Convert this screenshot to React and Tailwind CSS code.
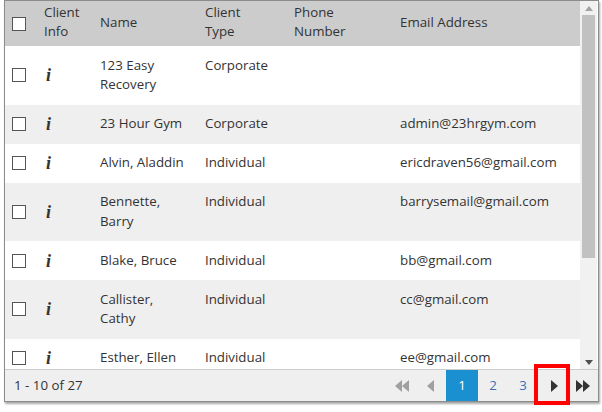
import React from 'react';

const clients = [
  { name: '123 Easy Recovery', type: 'Corporate', phone: '', email: '' },
  { name: '23 Hour Gym', type: 'Corporate', phone: '', email: 'admin@23hrgym.com' },
  { name: 'Alvin, Aladdin', type: 'Individual', phone: '', email: 'ericdraven56@gmail.com' },
  { name: 'Bennette, Barry', type: 'Individual', phone: '', email: 'barrysemail@gmail.com' },
  { name: 'Blake, Bruce', type: 'Individual', phone: '', email: 'bb@gmail.com' },
  { name: 'Callister, Cathy', type: 'Individual', phone: '', email: 'cc@gmail.com' },
  { name: 'Esther, Ellen', type: 'Individual', phone: '', email: 'ee@gmail.com' },
];

function Checkbox() {
  return <span className="block w-[14px] h-[14px] border border-[#555] bg-white" />;
}

function Triangle({ dir = 'right', color }) {
  return (
    <svg width="8" height="12" viewBox="0 0 8 12">
      {dir === 'right' ? (
        <path d="M1 0 L8 6 L1 12 Z" fill={color} />
      ) : (
        <path d="M7 0 L0 6 L7 12 Z" fill={color} />
      )}
    </svg>
  );
}

function DoubleTriangle({ dir = 'right', color }) {
  return (
    <svg width="15" height="12" viewBox="0 0 15 12">
      {dir === 'right' ? (
        <>
          <path d="M0 0 L7 6 L0 12 Z" fill={color} />
          <path d="M7 0 L14 6 L7 12 Z" fill={color} />
        </>
      ) : (
        <>
          <path d="M8 0 L1 6 L8 12 Z" fill={color} />
          <path d="M15 0 L8 6 L15 12 Z" fill={color} />
        </>
      )}
    </svg>
  );
}

function Scrollbar() {
  return (
    <div className="w-[17px] bg-[#f1f1f1] flex flex-col items-center">
      <div className="h-[14px] flex items-center justify-center">
        <svg width="8" height="5" viewBox="0 0 8 5"><path d="M0 5 L4 0 L8 5 Z" fill="#a3a3a3" /></svg>
      </div>
      <div className="w-[13px] h-[243px] bg-[#c1c1c1]" />
      <div className="flex-1" />
      <div className="h-[14px] flex items-center justify-center">
        <svg width="8" height="5" viewBox="0 0 8 5"><path d="M0 0 L4 5 L8 0 Z" fill="#505050" /></svg>
      </div>
    </div>
  );
}

export default function App() {
  return (
    <div className="w-[602px] h-[412px] bg-white pl-[4px]" style={{ fontFamily: '"Open Sans", sans-serif' }}>
      <div className="w-[595px] border border-[#8c8c8c] bg-white shadow-[1px_2px_2px_rgba(0,0,0,0.35)] text-[13.3px] text-[#333]">
        <div className="flex h-[368px]">
          <div className="w-[575px] overflow-hidden">
            <table className="table-fixed w-[575px] border-collapse">
              <colgroup>
                <col className="w-[30px]" />
                <col className="w-[57px]" />
                <col className="w-[105px]" />
                <col className="w-[89px]" />
                <col className="w-[106px]" />
                <col className="w-[188px]" />
              </colgroup>
              <thead>
                <tr className="bg-[#cccccc] h-[45px] leading-[19px] text-left">
                  <th className="pl-[7px] align-middle font-normal"><Checkbox /></th>
                  <th className="pl-[9px] pb-[3px] font-normal">Client<br />Info</th>
                  <th className="pl-[8px] pb-[3px] font-normal">Name</th>
                  <th className="pl-[8px] pb-[3px] font-normal">Client<br />Type</th>
                  <th className="pl-[8px] pb-[3px] font-normal">Phone<br />Number</th>
                  <th className="pl-[8px] pb-[3px] font-normal">Email Address</th>
                </tr>
              </thead>
              <tbody>
                {clients.map((c, i) => (
                  <tr key={c.name} className={i % 2 === 1 ? 'bg-[#efefef]' : 'bg-white'}>
                    <td className="pl-[7px] align-middle"><Checkbox /></td>
                    <td className="pl-[11px] align-middle">
                      <span
                        className="block text-[18px] leading-[14px] font-bold italic text-[#333]"
                        style={{ fontFamily: '"Liberation Serif", serif' }}
                      >
                        i
                      </span>
                    </td>
                    <td className="pl-[8px] pr-[9px] py-[9.75px] leading-[19.5px] align-top">{c.name}</td>
                    <td className="pl-[8px] py-[9.75px] leading-[19.5px] align-top">{c.type}</td>
                    <td className="pl-[8px] py-[9.75px] leading-[19.5px] align-top">{c.phone}</td>
                    <td className="pl-[8px] py-[9.75px] leading-[19.5px] align-top">{c.email}</td>
                  </tr>
                ))}
              </tbody>
            </table>
          </div>
          <Scrollbar />
        </div>
        <div className="h-[32px] border-t border-[#cccccc] bg-[#efefef] flex items-center">
          <span className="pl-[9px] flex-1">1 - 10 of 27</span>
          <div className="flex h-full">
            <button className="w-[30px] flex items-center justify-center"><DoubleTriangle dir="left" color="#a0a0a0" /></button>
            <button className="w-[30px] flex items-center justify-center"><Triangle dir="left" color="#a0a0a0" /></button>
            <button className="w-[32px] flex items-center justify-center bg-[#1a90d0] text-white">1</button>
            <button className="w-[30px] flex items-center justify-center text-[#3c70b8]">2</button>
            <button className="w-[30px] flex items-center justify-center text-[#3c70b8]">3</button>
            <button className="relative w-[31px] flex items-center justify-center">
              <Triangle dir="right" color="#333" />
              <span className="absolute left-[-4px] right-[-1px] top-[-6px] bottom-[-4px] border-[4px] border-[#ff0000]" />
            </button>
            <button className="w-[29px] flex items-center justify-center"><DoubleTriangle dir="right" color="#333" /></button>
          </div>
        </div>
      </div>
    </div>
  );
}
